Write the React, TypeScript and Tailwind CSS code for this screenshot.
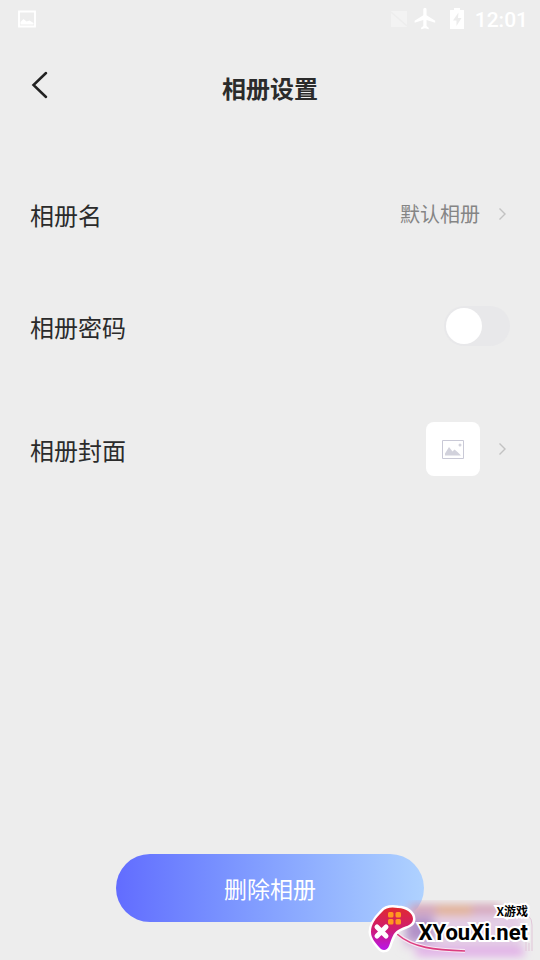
import { useState } from 'react';
import type { ReactNode } from 'react';

const Chevron = () => (
  <svg className="h-4 w-4 shrink-0" viewBox="0 0 16 16" fill="none" stroke="#c2c2c2" strokeWidth="1.4">
    <path d="M5.5 2.5 11 8l-5.5 5.5" />
  </svg>
);

const StatusBar = () => (
  <div className="flex h-[38px] items-center justify-between pl-4 pr-3 text-white">
    <svg className="h-[22px] w-[22px]" viewBox="0 0 22 22">
      <path d="M3 3.5h16v15H3z" fill="none" stroke="currentColor" strokeWidth="1.8" />
      <path d="M4.5 16.5v-2.5l3-3 3 2.5 3-1 4 2.5v1.5z" fill="currentColor" />
    </svg>
    <div className="flex items-center">
      <svg className="h-[18px] w-4" viewBox="0 0 16 18">
        <path d="M0 1h16v16H0z" fill="#f3f3f3" />
        <path d="m0 2 16 14" stroke="#ededed" strokeWidth="1.5" />
      </svg>
      <svg className="ml-1.5 h-[26px] w-[26px]" viewBox="0 0 24 24" fill="currentColor">
        <path d="M20.500 15.500v-2l-8-5V3a1.500 1.500 0 0 0-3 0v5.500l-8 5v2l8-2.500v5.500l-2 1.500v1.500l3.500-1 3.500 1V20l-2-1.500V13z" />
      </svg>
      <svg className="ml-2.5 h-[22px] w-4" viewBox="0 0 16 22">
        <path d="M5 0h6v2h3.5a.5.5 0 0 1 .5.5v18a.5.5 0 0 1-.5.5h-13a.5.5 0 0 1-.5-.5v-18a.5.5 0 0 1 .5-.5H5z" fill="currentColor" />
        <path d="M9.500 4.500 4 12.500h3.500v5.500l5-8H9z" fill="#ececec" />
      </svg>
      <span className="ml-2.5 pt-0.5 font-[Roboto,sans-serif] text-[21px] leading-6 font-medium">12:01</span>
    </div>
  </div>
);

const Row = ({ label, htmlFor, tall, children }: { label: string; htmlFor: string; tall?: boolean; children: ReactNode }) => (
  <div className={`flex items-center justify-between ${tall ? 'h-[134px]' : 'h-28'}`}>
    <label htmlFor={htmlFor} className="pt-0.5 text-2xl">{label}</label>
    {children}
  </div>
);

const Watermark = () => (
  <div className="absolute right-0 bottom-0 h-[60px] w-[172px]">
    <svg className="absolute inset-0 h-full w-full" viewBox="0 0 172 60">
      <defs>
        <linearGradient id="pad" x1="0" y1="0" x2="0" y2="1">
          <stop offset="0" stopColor="#e02a2e" />
          <stop offset="0.5" stopColor="#d01c70" />
          <stop offset="1" stopColor="#b916e8" />
        </linearGradient>
        <filter id="haze" x="-20%" y="-60%" width="140%" height="220%">
          <feGaussianBlur stdDeviation="5" />
        </filter>
      </defs>
      <g filter="url(#haze)">
        <path d="M36 10h118v38H36z" fill="#e3cde5" />
        <path d="M42 9h90" stroke="#cf94ac" strokeWidth="8" />
        <path d="M68 11h36" stroke="#e5ae72" strokeWidth="7" />
        <path d="M38 16h28v26H38z" fill="#b292c8" />
        <path d="M48 52h108" stroke="#df9be7" strokeWidth="7" />
      </g>
      <path d="M151 14q13-1 13 11v26M158 40v11M161 43v8" fill="none" stroke="#e1c5d8" strokeWidth="1" />
      <path d="M29 34c16 14 38 16 68 17" fill="none" stroke="#f6e6f2" strokeWidth="4" />
      <path d="M29 34c16 14 38 16 68 17" fill="none" stroke="#dc3d80" strokeWidth="1.6" />
      <path
        d="M3 32C3 24 8 18 14 12c4-5 10-5 16-4 8 0 15 5 15 11 0 7-9 7-15 11-5 3-6 8-9 16-2 5-7 5-10 1-4-5-8-9-8-15z"
        fill="url(#pad)"
        stroke="#fff"
        strokeWidth="5"
        paintOrder="stroke"
      />
      <path d="m9 27 9 9m0-9-9 9" stroke="#fff" strokeWidth="5" strokeLinecap="round" />
      <g fill="#ff9820">
        <rect x="20" y="12" width="5.500" height="5.500" rx="1.500" />
        <rect x="27.500" y="12" width="5.500" height="5.500" rx="1.500" />
        <rect x="20" y="19" width="5.500" height="5.500" rx="1.500" />
        <rect x="27.500" y="19" width="5.500" height="5.500" rx="1.500" />
      </g>
    </svg>
    <div className="absolute right-3 bottom-3.5 flex flex-col items-end text-black [paint-order:stroke] [-webkit-text-stroke:4px_white]">
      <span className="text-xs leading-[18px] font-bold">X游戏</span>
      <span className="font-[Roboto,sans-serif] text-[22px] leading-[26px] font-bold">XYouXi.net</span>
    </div>
  </div>
);

const App = () => {
  const [locked, setLocked] = useState(false);

  return (
    <div className="relative flex min-h-screen flex-col overflow-hidden bg-[#ededed] font-['Noto_Sans_CJK_SC',sans-serif] text-[#2b2b2b]">
      <StatusBar />

      <header className="grid h-[100px] grid-cols-[1fr_auto_1fr] items-center px-6">
        <button type="button" aria-label="返回" className="h-10 w-8 cursor-pointer pb-2">
          <svg className="h-8 w-8" viewBox="0 0 32 32" fill="none" stroke="#222" strokeWidth="2.500" strokeLinecap="round">
            <path d="M22 5 9.500 17 22 29" />
          </svg>
        </button>
        <h1 className="text-2xl font-bold">相册设置</h1>
      </header>

      <main className="mt-5 px-[30px]">
        <Row label="相册名" htmlFor="album-name">
          <button id="album-name" type="button" className="flex cursor-pointer items-center gap-3.5 text-xl text-[#858585]">
            默认相册
            <Chevron />
          </button>
        </Row>

        <Row label="相册密码" htmlFor="album-lock">
          <input
            id="album-lock"
            type="checkbox"
            role="switch"
            checked={locked}
            onChange={(e) => setLocked(e.target.checked)}
            className="h-10 w-[66px] cursor-pointer appearance-none rounded-full bg-[#e8e8ea] p-0.5 before:block before:h-9 before:w-9 before:rounded-full before:bg-white before:transition-transform checked:bg-[#6b75ff] checked:before:translate-x-[26px]"
          />
        </Row>

        <Row label="相册封面" htmlFor="album-cover" tall>
          <button id="album-cover" type="button" className="flex cursor-pointer items-center gap-3.5">
            <span className="flex h-[54px] w-[54px] items-center justify-center rounded-lg bg-white">
              <svg className="h-5 w-[22px]" viewBox="0 0 22 20" fill="#d2d2dc">
                <path d="M.5 1.500h21v18H.5z" fill="none" stroke="#c9c9d6" />
                <path d="M3 16.500v-2L7 8l3.500 4.500 2-2 3 2.500 3.500 3.500z" />
                <circle cx="18" cy="6" r="1.500" />
              </svg>
            </span>
            <Chevron />
          </button>
        </Row>
      </main>

      <footer className="mt-auto flex justify-center pb-[38px]">
        <button
          type="button"
          className="h-[68px] w-[308px] cursor-pointer rounded-full bg-linear-to-r from-[#626cff] to-[#afd2ff] text-[23px] text-white"
        >
          删除相册
        </button>
      </footer>

      <Watermark />
    </div>
  );
};

export default App;
